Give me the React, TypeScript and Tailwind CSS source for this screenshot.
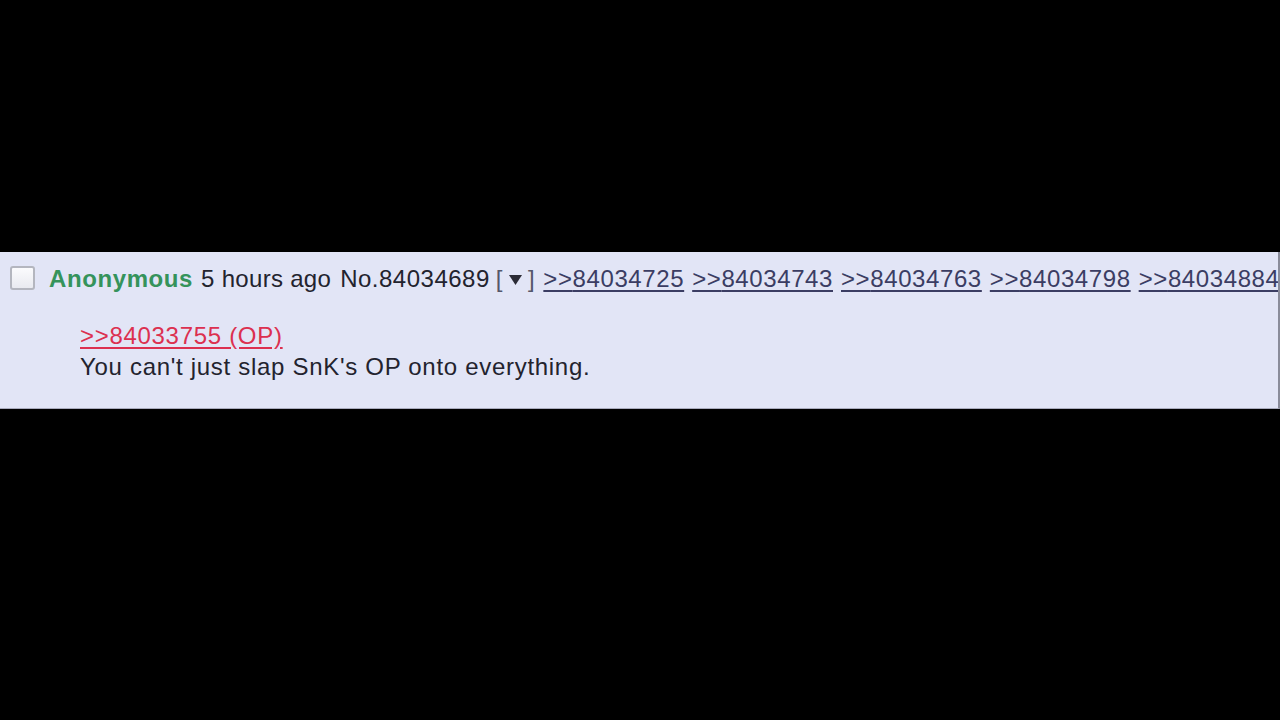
import React from "react"

const replies = ["84034725", "84034743", "84034763", "84034798", "84034884"]

export default function App() {
  return (
    <div className="min-h-screen w-full bg-black pt-[252px] font-['Liberation_Sans',Arial,sans-serif] text-[24px] leading-[31px] tracking-[0.6px]">
      <div className="w-[1280px] overflow-hidden border-r-2 border-b border-r-[#8a8c9a] border-b-[#a9abbd] bg-[#e2e5f6] pb-[26px]">
        <div className="flex h-[52px] items-center whitespace-nowrap text-[#23232e]">
          <span className="ml-[10px] h-[24px] w-[25px] shrink-0 rounded-[3px] border-2 border-[#b4b6bf] bg-gradient-to-b from-[#fbfbfd] to-[#e9eaf0]" />
          <span className="ml-[14px] font-bold text-[#35935b]">Anonymous</span>
          <span className="ml-[8px] tracking-[0.3px]">5 hours ago</span>
          <span className="ml-[9px] tracking-[0.5px]">No.84034689</span>
          <span className="ml-[6px] flex items-center text-[#55576a]">
            [
            <svg width="15" height="12" viewBox="0 0 15 12" className="mx-[5px] mt-[3px]">
              <path d="M1 1 L14 1 L7.5 11 Z" fill="#2b2b36" />
            </svg>
            ]
          </span>
          {replies.map((r) => (
            <a key={r} href="#" className="ml-[8px] text-[#3b3d63] underline underline-offset-[3px]">
              &gt;&gt;{r}
            </a>
          ))}
        </div>
        <div className="mt-[16px] pl-[80px] text-[#23232e] tracking-[0.7px]">
          <a href="#" className="text-[#dc3050] underline underline-offset-[3px]">
            &gt;&gt;84033755 (OP)
          </a>
          <div>You can't just slap SnK's OP onto everything.</div>
        </div>
      </div>
    </div>
  )
}
